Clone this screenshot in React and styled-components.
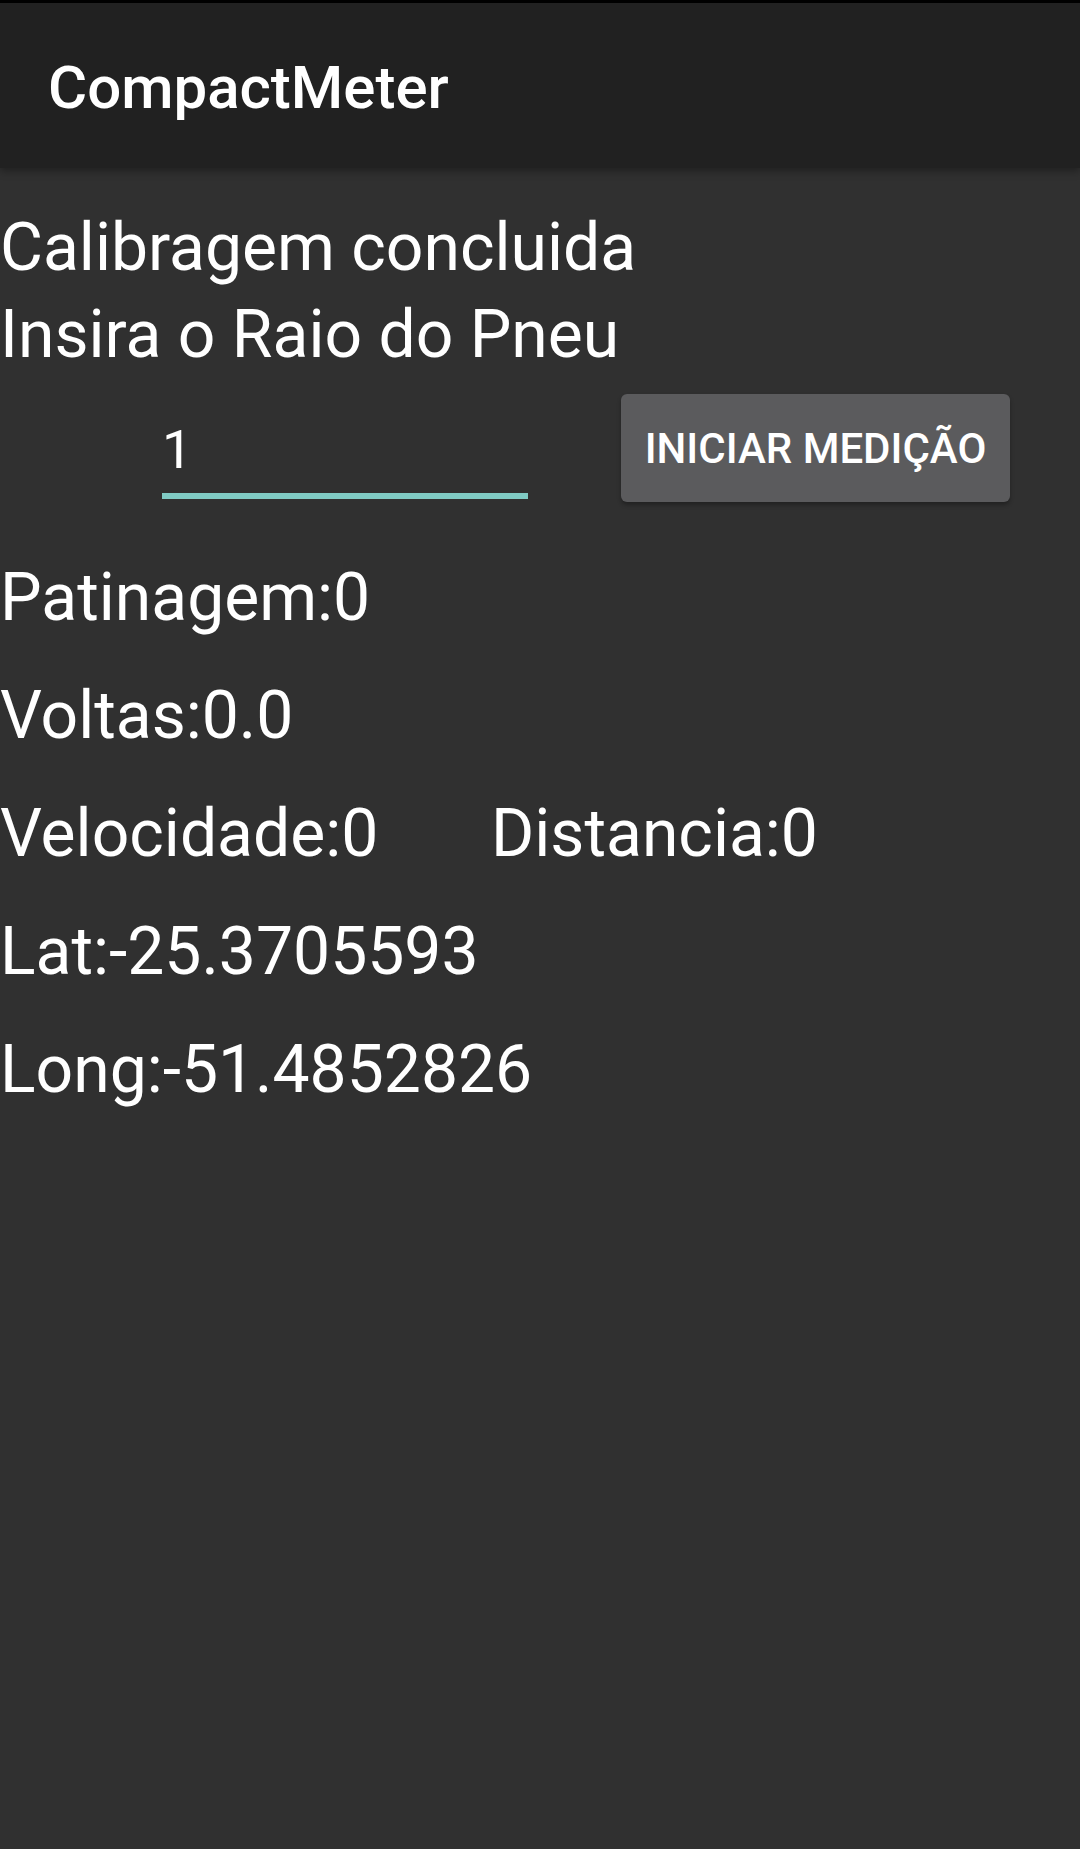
import React from "react";
import styled, { createGlobalStyle } from "styled-components";

const Global = createGlobalStyle`
  html, body {
    margin: 0;
    padding: 0;
    background: #303030;
  }
  body {
    font-family: Roboto, "Noto Sans", "Liberation Sans", sans-serif;
    color: #ffffff;
  }
  #root {
    min-height: 1849px;
    background: #303030;
  }
`;

const Screen = styled.div`
  width: 1080px;
  min-height: 1849px;
  background: #303030;
  display: flex;
  flex-direction: column;
`;

const AppBar = styled.header`
  position: relative;
  z-index: 1;
  box-sizing: border-box;
  height: 168px;
  background: #212121;
  border-top: 3px solid #000000;
  display: flex;
  align-items: center;
  padding: 4px 0 0 48px;
  box-shadow: 0 3px 8px rgba(0, 0, 0, 0.35);
`;

const Title = styled.h1`
  margin: 0;
  font-family: Roboto, "Noto Sans", sans-serif;
  font-weight: 500;
  font-size: 60px;
  line-height: 70px;
  color: #ffffff;
`;

const Content = styled.main`
  display: flex;
  flex-direction: column;
  padding-top: 41px;
`;

const Message = styled.p`
  margin: 0 0 ${(p) => p.$gap || 0}px 0;
  font-size: 66px;
  line-height: 77px;
  font-weight: 400;
  color: #ffffff;
  white-space: nowrap;
`;

const InputRow = styled.div`
  display: flex;
  align-items: flex-start;
  padding-left: 162px;
  gap: 93px;
  margin-top: 21px;
`;

const RadiusInput = styled.input`
  box-sizing: border-box;
  width: 366px;
  height: 105px;
  padding: 12px 0 0 0;
  margin: 0;
  border: none;
  border-bottom: 6px solid #80cbc4;
  background: transparent;
  outline: none;
  color: #ffffff;
  font-family: Roboto, "Noto Sans", sans-serif;
  font-size: 54px;
  font-weight: 400;
`;

const StartButton = styled.button`
  box-sizing: border-box;
  width: 389px;
  height: 108px;
  margin: 0;
  padding: 0;
  border: none;
  border-radius: 6px;
  background: #5b5b5d;
  color: #ffffff;
  font-family: Roboto, "Noto Sans", sans-serif;
  font-weight: 500;
  font-size: 42px;
  letter-spacing: 0;
  text-transform: uppercase;
  display: flex;
  align-items: center;
  justify-content: center;
  box-shadow: 0 3px 4px rgba(0, 0, 0, 0.3);
`;

const Stats = styled.section`
  display: flex;
  flex-direction: column;
  gap: 41px;
  margin-top: 57px;
`;

const StatRow = styled.div`
  display: flex;
  align-items: baseline;
`;

const Stat = styled.span`
  display: block;
  width: ${(p) => (p.$width ? `${p.$width}px` : "auto")};
  font-size: 66px;
  line-height: 77px;
  color: #ffffff;
  white-space: nowrap;
`;

export default function App() {
  return (
    <>
      <Global />
      <Screen>
        <AppBar>
          <Title>CompactMeter</Title>
        </AppBar>
        <Content>
          <Message $gap={10}>Calibragem concluida</Message>
          <Message>Insira o Raio do Pneu</Message>
          <InputRow>
            <RadiusInput type="text" defaultValue="1" aria-label="Raio do pneu" />
            <StartButton type="button">Iniciar Medição</StartButton>
          </InputRow>
          <Stats>
            <StatRow>
              <Stat>Patinagem:0</Stat>
            </StatRow>
            <StatRow>
              <Stat>Voltas:0.0</Stat>
            </StatRow>
            <StatRow>
              <Stat $width={491}>Velocidade:0</Stat>
              <Stat>Distancia:0</Stat>
            </StatRow>
            <StatRow>
              <Stat>Lat:-25.3705593</Stat>
            </StatRow>
            <StatRow>
              <Stat>Long:-51.4852826</Stat>
            </StatRow>
          </Stats>
        </Content>
      </Screen>
    </>
  );
}
